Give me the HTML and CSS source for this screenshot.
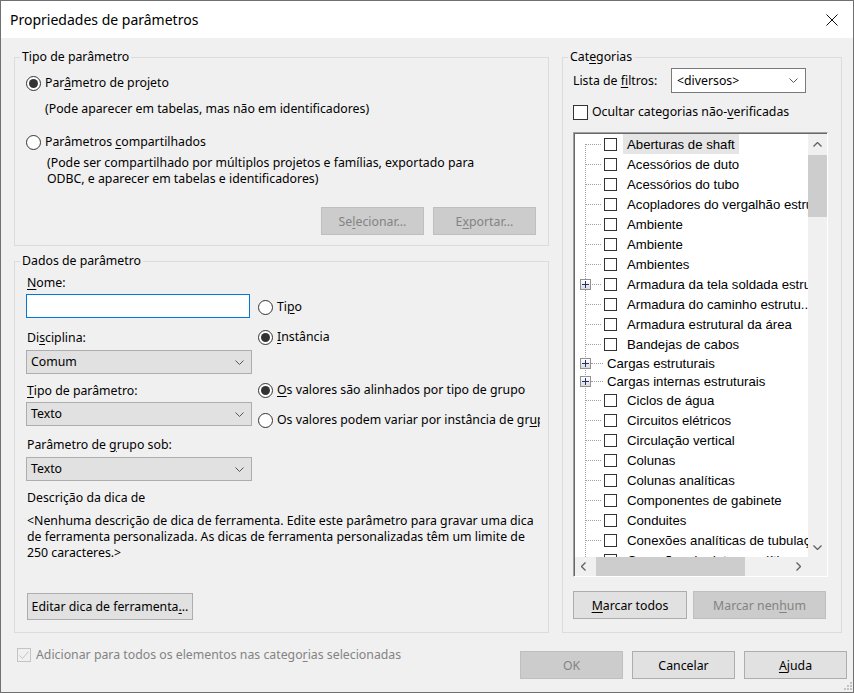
FILE: index.html
```html
<!DOCTYPE html>
<html lang="pt-br">
<head>
    <meta charset="UTF-8">
    <title>Propriedades de parâmetros</title>
    <link rel="stylesheet" href="styles.css">
</head>
<body>
<div class="janela">
    <!-- Barra de título -->
    <div class="titulo">
        <span class="titulo-texto">Propriedades de parâmetros</span>
        <svg class="fechar" width="12" height="12" viewBox="0 0 12 12"><path d="M0.5 0.5 L11.5 11.5 M11.5 0.5 L0.5 11.5" stroke="#111" stroke-width="1" fill="none"/></svg>
    </div>

    <div class="corpo">
        <div class="coluna-esq">
            <!-- Tipo de parâmetro -->
            <div class="grupo grupo-tipo">
                <div class="grupo-titulo">Tipo de parâmetro</div>
                <label class="radio"><span class="bola marcada"></span><span>Par<u>â</u>metro de projeto</span></label>
                <p class="nota nota-1">(Pode aparecer em tabelas, mas não em identificadores)</p>
                <label class="radio radio-2"><span class="bola"></span><span>Parâmetros <u>c</u>ompartilhados</span></label>
                <p class="nota nota-2">(Pode ser compartilhado por múltiplos projetos e famílias, exportado para<br>ODBC, e aparecer em tabelas e identificadores)</p>
                <div class="botoes-direita">
                    <button class="botao" disabled>Se<u>l</u>ecionar...</button>
                    <button class="botao" disabled>E<u>x</u>portar...</button>
                </div>
            </div>

            <!-- Dados de parâmetro -->
            <div class="grupo grupo-dados">
                <div class="grupo-titulo">Dados de parâmetro</div>
                <div class="param-grid">
                    <div class="campos">
                        <div class="rotulo"><u>N</u>ome:</div>
                        <input type="text" class="entrada">
                        <div class="rotulo r-disc">Di<u>s</u>ciplina:</div>
                        <div class="combo c-disc"><span>Comum</span>
                            <svg width="9" height="5" viewBox="0 0 9 5"><polyline points="0.5,0.5 4.5,4.5 8.5,0.5" stroke="#555" fill="none"/></svg>
                        </div>
                        <div class="rotulo r-tipo"><u>T</u>ipo de parâmetro:</div>
                        <div class="combo c-tipo"><span>Texto</span>
                            <svg width="9" height="5" viewBox="0 0 9 5"><polyline points="0.5,0.5 4.5,4.5 8.5,0.5" stroke="#555" fill="none"/></svg>
                        </div>
                        <div class="rotulo r-grupo">Parâmetro de <u>g</u>rupo sob:</div>
                        <div class="combo c-grupo"><span>Texto</span>
                            <svg width="9" height="5" viewBox="0 0 9 5"><polyline points="0.5,0.5 4.5,4.5 8.5,0.5" stroke="#555" fill="none"/></svg>
                        </div>
                    </div>
                    <div class="opcoes">
                        <label class="radio o-tipo"><span class="bola"></span><span>Ti<u>p</u>o</span></label>
                        <label class="radio o-inst"><span class="bola marcada"></span><span><u>I</u>nstância</span></label>
                        <label class="radio o-alin"><span class="bola marcada"></span><span><u>O</u>s valores são alinhados por tipo de grupo</span></label>
                        <label class="radio o-var"><span class="bola"></span><span>Os valores podem variar por instância de gr<u>u</u>po</span></label>
                    </div>
                </div>
                <div class="rotulo r-desc">Descrição da dica de</div>
                <p class="descricao">&lt;Nenhuma descrição de dica de ferramenta. Edite este parâmetro para gravar uma dica<br>de ferramenta personalizada. As dicas de ferramenta personalizadas têm um limite de<br>250 caracteres.&gt;</p>
                <button class="botao botao-editar">Editar dica de ferramenta<u>.</u>..</button>
            </div>
        </div>

        <!-- Categorias -->
        <div class="grupo grupo-categorias">
            <div class="grupo-titulo">Cat<u>e</u>gorias</div>
            <div class="filtro">
                <span class="filtro-rotulo">Lista de <u>f</u>iltros:</span>
                <div class="combo-branco"><span>&lt;diversos&gt;</span>
                    <svg width="9" height="5" viewBox="0 0 9 5"><polyline points="0.5,0.5 4.5,4.5 8.5,0.5" stroke="#555" fill="none"/></svg>
                </div>
            </div>
            <label class="marcar">
                <span class="caixa-grande"></span><span>Ocultar categorias não-<u>v</u>erificadas</span>
            </label>

            <div class="arvore">
                <div class="arvore-interna">
                    <ul class="lista">
                        <li class="no"><span class="ramo"></span><span class="caixa"></span><span class="nome selecionado">Aberturas de shaft</span></li>
                        <li class="no"><span class="ramo"></span><span class="caixa"></span><span class="nome">Acessórios de duto</span></li>
                        <li class="no"><span class="ramo"></span><span class="caixa"></span><span class="nome">Acessórios do tubo</span></li>
                        <li class="no"><span class="ramo"></span><span class="caixa"></span><span class="nome">Acopladores do vergalhão estrutural</span></li>
                        <li class="no"><span class="ramo"></span><span class="caixa"></span><span class="nome">Ambiente</span></li>
                        <li class="no"><span class="ramo"></span><span class="caixa"></span><span class="nome">Ambiente</span></li>
                        <li class="no"><span class="ramo"></span><span class="caixa"></span><span class="nome">Ambientes</span></li>
                        <li class="no"><span class="ramo"><span class="mais"></span></span><span class="caixa"></span><span class="nome">Armadura da tela soldada estrutural</span></li>
                        <li class="no"><span class="ramo"></span><span class="caixa"></span><span class="nome">Armadura do caminho estrutu...</span></li>
                        <li class="no"><span class="ramo"></span><span class="caixa"></span><span class="nome">Armadura estrutural da área</span></li>
                        <li class="no"><span class="ramo"></span><span class="caixa"></span><span class="nome">Bandejas de cabos</span></li>
                        <li class="no pasta"><span class="ramo"><span class="mais"></span></span><span class="nome">Cargas estruturais</span></li>
                        <li class="no pasta"><span class="ramo"><span class="mais"></span></span><span class="nome">Cargas internas estruturais</span></li>
                        <li class="no"><span class="ramo"></span><span class="caixa"></span><span class="nome">Ciclos de água</span></li>
                        <li class="no"><span class="ramo"></span><span class="caixa"></span><span class="nome">Circuitos elétricos</span></li>
                        <li class="no"><span class="ramo"></span><span class="caixa"></span><span class="nome">Circulação vertical</span></li>
                        <li class="no"><span class="ramo"></span><span class="caixa"></span><span class="nome">Colunas</span></li>
                        <li class="no"><span class="ramo"></span><span class="caixa"></span><span class="nome">Colunas analíticas</span></li>
                        <li class="no"><span class="ramo"></span><span class="caixa"></span><span class="nome">Componentes de gabinete</span></li>
                        <li class="no"><span class="ramo"></span><span class="caixa"></span><span class="nome">Conduites</span></li>
                        <li class="no"><span class="ramo"></span><span class="caixa"></span><span class="nome">Conexões analíticas de tubulação</span></li>
                        <li class="no"><span class="ramo"></span><span class="caixa"></span><span class="nome">Conexões de dutos analíticos</span></li>
                    </ul>
                    <div class="vbarra">
                        <div class="seta">
                            <svg width="9" height="5" viewBox="0 0 9 5"><polyline points="0.5,4.5 4.5,0.5 8.5,4.5" stroke="#606060" stroke-width="1.3" fill="none"/></svg>
                        </div>
                        <div class="polegar-v"></div>
                        <div class="seta seta-baixo">
                            <svg width="9" height="5" viewBox="0 0 9 5"><polyline points="0.5,0.5 4.5,4.5 8.5,0.5" stroke="#606060" stroke-width="1.3" fill="none"/></svg>
                        </div>
                    </div>
                    <div class="hbarra">
                        <div class="seta-h">
                            <svg width="5" height="9" viewBox="0 0 5 9"><polyline points="4.5,0.5 0.5,4.5 4.5,8.5" stroke="#606060" stroke-width="1.3" fill="none"/></svg>
                        </div>
                        <div class="polegar-h"></div>
                        <div class="seta-h seta-dir">
                            <svg width="5" height="9" viewBox="0 0 5 9"><polyline points="0.5,0.5 4.5,4.5 0.5,8.5" stroke="#606060" stroke-width="1.3" fill="none"/></svg>
                        </div>
                    </div>
                    <div class="canto"></div>
                </div>
            </div>

            <div class="botoes-categorias">
                <button class="botao b-todos"><u>M</u>arcar todos</button>
                <button class="botao b-nenhum" disabled>Marcar nen<u>h</u>um</button>
            </div>
        </div>
    </div>

    <!-- Rodapé -->
    <div class="rodape">
        <label class="marcar-desab">
            <span class="caixa-desab">
                <svg width="12" height="12" viewBox="0 0 12 12"><polyline points="1.5,6.5 4.5,9.5 10.5,2.5" stroke="#c4c4c4" stroke-width="1" fill="none"/></svg>
            </span>
            <span>Adicionar para todos os elementos nas catego<u>r</u>ias selecionadas</span>
        </label>
        <div class="botoes-rodape">
            <button class="botao" disabled>OK</button>
            <button class="botao">Cancelar</button>
            <button class="botao"><u>A</u>juda</button>
        </div>
    </div>

    <svg class="alca" width="9" height="9" viewBox="0 0 9 9">
        <rect x="7" y="1" width="2" height="2" fill="#c3c3c3"/>
        <rect x="4" y="4" width="2" height="2" fill="#c3c3c3"/>
        <rect x="7" y="4" width="2" height="2" fill="#c3c3c3"/>
        <rect x="1" y="7" width="2" height="2" fill="#c3c3c3"/>
        <rect x="4" y="7" width="2" height="2" fill="#c3c3c3"/>
        <rect x="7" y="7" width="2" height="2" fill="#c3c3c3"/>
    </svg>
</div>
</body>
</html>
```

FILE: styles.css
```css
/* Reset */
* {
    margin: 0;
    padding: 0;
    box-sizing: border-box;
}

body {
    font-family: "Noto Sans", "Open Sans", sans-serif;
    font-size: 12.3px;
    line-height: 16px;
    color: #000;
    background: #fff;
}

u {
    text-underline-offset: 2px;
}

/* Janela */
.janela {
    position: relative;
    width: 854px;
    height: 693px;
    border: 1px solid #707070;
    background-color: #f0f0f0;
    display: flex;
    flex-direction: column;
}

.titulo {
    height: 37px;
    background-color: #fff;
    display: flex;
    align-items: center;
    justify-content: space-between;
    padding: 1px 15px 0 9px;
    flex-shrink: 0;
}

.titulo-texto {
    font-size: 14px;
}

.corpo {
    display: flex;
    gap: 13px;
    padding: 19px 0 0 13px;
}

.coluna-esq {
    width: 535px;
    display: flex;
    flex-direction: column;
    gap: 15px;
}

/* Grupos (caixas com título) */
.grupo {
    position: relative;
    border: 1px solid #dcdcdc;
}

.grupo-titulo {
    position: absolute;
    top: -9px;
    left: 5px;
    padding: 0 2px;
    background-color: #f0f0f0;
    line-height: 16px;
}

.grupo-tipo {
    height: 189px;
    padding: 17px 12px 0 11px;
}

.grupo-dados {
    height: 372px;
    padding: 13px 11px 0 11px;
}

.grupo-categorias {
    width: 280px;
    height: 576px;
    padding: 10px 0 0 10px;
}

/* Radios */
.radio {
    display: flex;
    align-items: center;
    gap: 4px;
    height: 16px;
    white-space: nowrap;
}

.bola {
    width: 15px;
    height: 15px;
    border: 1px solid #333;
    border-radius: 50%;
    background-color: #fff;
    display: flex;
    align-items: center;
    justify-content: center;
    flex-shrink: 0;
}

.bola.marcada::after {
    content: "";
    width: 9px;
    height: 9px;
    border-radius: 50%;
    background-color: #333;
}

.nota {
    white-space: nowrap;
}

.nota-1 {
    margin: 10px 0 0 19px;
}

.radio-2 {
    margin-top: 17px;
}

.nota-2 {
    margin: 5px 0 0 21px;
}

/* Botões */
.botao {
    font-family: inherit;
    font-size: 12.3px;
    color: #000;
    width: 103px;
    height: 28px;
    background-color: #e1e1e1;
    border: 1px solid #adadad;
}

.botao:disabled {
    background-color: #cccccc;
    border-color: #bfbfbf;
    color: #838383;
}

.botoes-direita {
    display: flex;
    justify-content: flex-end;
    gap: 9px;
    margin-top: 20px;
}

/* Dados de parâmetro */
.param-grid {
    display: flex;
    gap: 6px;
}

.campos {
    width: 226px;
    flex-shrink: 0;
    display: flex;
    flex-direction: column;
}

.rotulo {
    padding-left: 1px;
    white-space: nowrap;
}

.entrada {
    margin-top: 3px;
    width: 224px;
    height: 24px;
    border: 1px solid #0078d7;
    background-color: #fff;
    outline: none;
}

.r-disc { margin-top: 12px; }
.r-tipo { margin-top: 9px; }
.r-grupo { margin-top: 11px; }

.combo {
    height: 24px;
    width: 226px;
    border: 1px solid #adadad;
    background-color: #e1e1e1;
    display: flex;
    align-items: center;
    justify-content: space-between;
    padding: 0 7px 0 4px;
}

.c-disc { margin-top: 4px; }
.c-tipo { margin-top: 3px; }
.c-grupo { margin-top: 4px; }

.opcoes {
    width: 282px;
    flex-shrink: 0;
    overflow: hidden;
    display: flex;
    flex-direction: column;
}

.o-tipo { margin-top: 24px; }
.o-inst { margin-top: 14px; }
.o-alin { margin-top: 37px; }
.o-var { margin-top: 14px; }

.r-desc {
    margin-top: 9px;
}

.descricao {
    margin: 7px 0 0 1px;
    white-space: nowrap;
}

.botao-editar {
    width: 166px;
    height: 27px;
    margin: 32px 0 0 1px;
}

/* Categorias */
.filtro {
    display: flex;
    align-items: center;
    height: 25px;
}

.filtro-rotulo {
    width: 98px;
}

.combo-branco {
    width: 135px;
    height: 25px;
    border: 1px solid #7a7a7a;
    background-color: #fff;
    display: flex;
    align-items: center;
    justify-content: space-between;
    padding: 0 7px 0 5px;
}

.marcar {
    display: flex;
    align-items: center;
    gap: 4px;
    height: 16px;
    margin-top: 11px;
}

.caixa-grande {
    width: 15px;
    height: 15px;
    border: 1px solid #333;
    background-color: #fff;
}

/* Árvore de categorias */
.arvore {
    width: 255px;
    height: 445px;
    margin-top: 12px;
    border: 1px solid;
    border-color: #a0a0a0 #ffffff #ffffff #a0a0a0;
}

.arvore-interna {
    height: 100%;
    display: grid;
    grid-template-columns: 1fr 19px;
    grid-template-rows: 1fr 19px;
    border-style: solid;
    border-width: 1px 0 0 1px;
    border-color: #696969;
    background-color: #fff;
}

.lista {
    position: relative;
    list-style: none;
    overflow: hidden;
    font-family: "Liberation Sans", Arial, sans-serif;
    font-size: 13.2px;
}

.lista::before {
    content: "";
    position: absolute;
    left: 10px;
    top: 10px;
    bottom: 0;
    border-left: 1px dotted #a0a0a0;
}

.no {
    display: flex;
    align-items: center;
    height: 20px;
    white-space: nowrap;
}

.no.pasta {
    height: 18px;
}

.ramo {
    position: relative;
    width: 29px;
    height: 100%;
    flex-shrink: 0;
}

.ramo::after {
    content: "";
    position: absolute;
    left: 11px;
    top: 50%;
    width: 15px;
    border-top: 1px dotted #a0a0a0;
}

.pasta .ramo {
    width: 28px;
}

.pasta .ramo::after {
    left: 16px;
    width: 12px;
}

.mais {
    position: absolute;
    z-index: 1;
    left: 5px;
    top: 50%;
    margin-top: -5px;
    width: 11px;
    height: 11px;
    border: 1px solid #919191;
    background: linear-gradient(#ffffff, #dadada);
}

.mais::before,
.mais::after {
    content: "";
    position: absolute;
    background-color: #1c3277;
}

.mais::before {
    left: 1px;
    top: 4px;
    width: 7px;
    height: 1px;
}

.mais::after {
    left: 4px;
    top: 1px;
    width: 1px;
    height: 7px;
}

.caixa {
    width: 13px;
    height: 13px;
    border: 1px solid #333;
    background-color: #fff;
    flex-shrink: 0;
}

.nome {
    margin-left: 6px;
    padding: 1px 4px 0;
    line-height: 19px;
}

.pasta .nome {
    margin-left: 0;
    line-height: 17px;
}

.nome.selecionado {
    background-color: #e5e5e5;
}

/* Barras de rolagem */
.vbarra {
    background-color: #f0f0f0;
    display: flex;
    flex-direction: column;
}

.seta {
    height: 17px;
    display: flex;
    align-items: center;
    justify-content: center;
    padding-top: 3px;
}

.seta-baixo {
    margin-top: auto;
    padding-top: 0;
    height: 19px;
}

.polegar-v {
    margin-top: 4px;
    height: 62px;
    background-color: #cdcdcd;
}

.hbarra {
    background-color: #f0f0f0;
    display: flex;
}

.seta-h {
    width: 17px;
    display: flex;
    align-items: center;
    justify-content: center;
}

.seta-dir {
    margin-left: auto;
    width: 20px;
}

.polegar-h {
    margin-left: 4px;
    width: 149px;
    background-color: #cdcdcd;
}

.canto {
    background-color: #f0f0f0;
}

.botoes-categorias {
    display: flex;
    gap: 6px;
    margin-top: 14px;
}

.b-todos {
    width: 114px;
}

.b-nenhum {
    width: 133px;
}

/* Rodapé */
.rodape {
    display: flex;
    justify-content: space-between;
    padding: 14px 6px 0 16px;
}

.marcar-desab {
    display: flex;
    align-items: center;
    gap: 5px;
    height: 16px;
    color: #838383;
}

.caixa-desab {
    width: 14px;
    height: 14px;
    border: 1px solid #c4c4c4;
    display: flex;
    align-items: center;
    justify-content: center;
}

.botoes-rodape {
    display: flex;
    gap: 9px;
    margin-top: 4px;
}

.alca {
    position: absolute;
    right: 1px;
    bottom: 2px;
}
```
